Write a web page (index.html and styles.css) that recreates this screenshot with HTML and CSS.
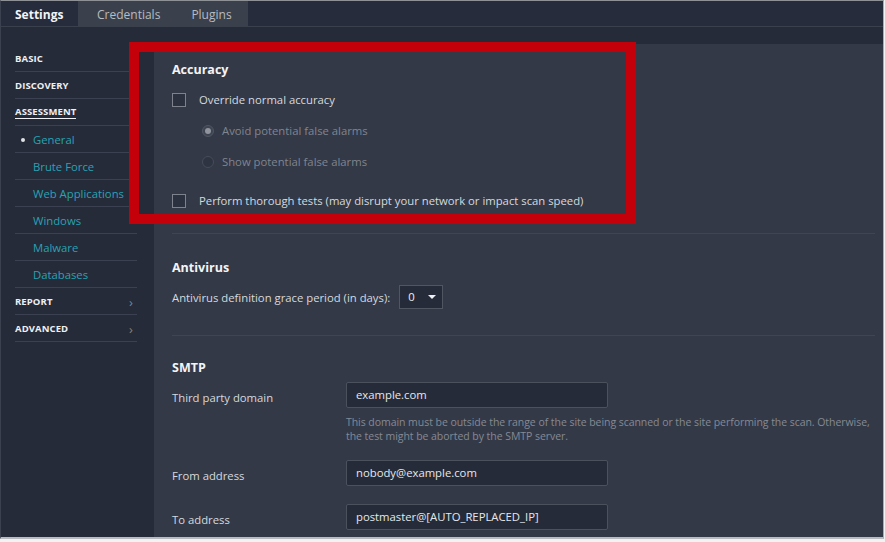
FILE: index.html
```html
<!DOCTYPE html>
<html>
<head>
<meta charset="utf-8">
<link rel="stylesheet" href="styles.css">
</head>
<body>
<div class="frame">
  <div class="tabs">
    <div class="tab active">Settings</div>
    <div class="tab-group">
      <div class="tab">Credentials</div>
      <div class="tab">Plugins</div>
    </div>
  </div>
  <div class="main">
    <nav class="sidebar">
      <div class="nav-item top">BASIC<span class="chev">&#8250;</span></div>
      <div class="nav-item top">DISCOVERY<span class="chev">&#8250;</span></div>
      <div class="nav-item top"><span class="current">ASSESSMENT</span><span class="chev">&#8250;</span></div>
      <div class="nav-item sub selected"><span class="dot"></span>General</div>
      <div class="nav-item sub">Brute Force</div>
      <div class="nav-item sub">Web Applications</div>
      <div class="nav-item sub">Windows</div>
      <div class="nav-item sub">Malware</div>
      <div class="nav-item sub">Databases</div>
      <div class="nav-item top">REPORT<span class="chev">&#8250;</span></div>
      <div class="nav-item top">ADVANCED<span class="chev">&#8250;</span></div>
    </nav>
    <section class="content">
      <div class="section s1">
        <h2 class="heading">Accuracy</h2>
        <label class="row check-row first"><span class="checkbox"></span>Override normal accuracy</label>
        <label class="row radio-row disabled"><span class="radio on"></span>Avoid potential false alarms</label>
        <label class="row radio-row disabled"><span class="radio"></span>Show potential false alarms</label>
        <label class="row check-row gap"><span class="checkbox"></span>Perform thorough tests (may disrupt your network or impact scan speed)</label>
      </div>
      <div class="section s2">
        <h2 class="heading">Antivirus</h2>
        <div class="grace">
          <span>Antivirus definition grace period (in days):</span>
          <div class="select">0<span class="caret"></span></div>
        </div>
      </div>
      <div class="section s3">
        <h2 class="heading">SMTP</h2>
        <div class="field f1">
          <div class="label">Third party domain</div>
          <div class="control">
            <div class="input">example.com</div>
            <p class="help">This domain must be outside the range of the site being scanned or the site performing the scan. Otherwise, the test might be aborted by the SMTP server.</p>
          </div>
        </div>
        <div class="field f2">
          <div class="label">From address</div>
          <div class="control"><div class="input">nobody@example.com</div></div>
        </div>
        <div class="field f3">
          <div class="label">To address</div>
          <div class="control"><div class="input">postmaster@[AUTO_REPLACED_IP]</div></div>
        </div>
      </div>
    </section>
  </div>
  <div class="highlight"></div>
</div>
</body>
</html>
```
FILE: styles.css
```css
* { box-sizing: border-box; }
html, body { margin: 0; padding: 0; }
body {
  background: #f2f2f2;
  font-family: "Open Sans", "Noto Sans", sans-serif;
  width: 885px;
  height: 542px;
  overflow: hidden;
}
.frame {
  position: relative;
  width: 884px;
  height: 539px;
  background: #252b39;
  border-top: 1px solid #8e9196;
  border-right: 1px solid #a9acb1;
  border-left: 1px solid #3c4150;
  border-bottom: 2px solid #b9bbbe;
  overflow: hidden;
}
.tabs {
  display: flex;
  height: 26px;
  background: #262c3b;
  border-bottom: 1px solid #3a404c;
}
.tab {
  font-size: 12px;
  line-height: 24px;
  padding-top: 2px;
  color: #b8bbc1;
}
.tab.active {
  width: 77px;
  padding-left: 14px;
  font-weight: 700;
  color: #f3f4f6;
}
.tab-group {
  display: flex;
  background: #3b414c;
  width: 170px;
  padding-left: 19px;
  gap: 31px;
}
.main {
  display: flex;
  height: 510px;
}
.sidebar {
  width: 153px;
  padding: 18px 0 0 14px;
  background: #252b39;
}
.nav-item {
  position: relative;
  width: 122px;
  height: 27px;
  border-bottom: 1px solid #3b4150;
  display: flex;
  align-items: center;
  font-size: 11.3px;
  color: #2aa2b3;
}
.nav-item.top {
  font-size: 9.5px;
  font-weight: 700;
  color: #eef0f3;
  letter-spacing: 0.1px;
}
.nav-item .current {
  border-bottom: 1px solid #eef0f3;
  line-height: 12px;
}
.nav-item.sub { padding-left: 18px; padding-top: 1px; }
.dot {
  position: absolute;
  left: 6px;
  top: 12px;
  width: 4px;
  height: 4px;
  border-radius: 50%;
  background: #dfe2e6;
}
.chev {
  position: absolute;
  right: 4px;
  top: 5px;
  font-size: 13px;
  font-weight: 400;
  color: #7d828c;
}
.content {
  flex: 1;
  margin-top: 17px;
  background: #333947;
  padding: 0 8px 0 18px;
}
.section { border-bottom: 1px solid #3f4553; }
.s1 { padding-top: 16px; height: 190px; }
.s2 { padding-top: 24px; height: 102px; }
.s3 { padding-top: 22px; border-bottom: none; }
.heading {
  margin: 0;
  font-size: 12.5px;
  font-weight: 700;
  line-height: 20px;
  color: #f3f4f6;
}
.row {
  display: flex;
  align-items: center;
  height: 31px;
  font-size: 11.3px;
  color: #d6d9de;
}
.row.first { margin-top: 4px; }
.row.gap { margin-top: 8px; }
.checkbox {
  width: 14px;
  height: 14px;
  border: 1px solid #7d828c;
  background: #2b313e;
  margin-right: 13px;
}
.radio-row { padding-left: 30px; color: #80858f; }
.radio {
  width: 12px;
  height: 12px;
  border-radius: 50%;
  border: 1px solid #464c58;
  background: #2e3441;
  margin-right: 8px;
  display: flex;
  align-items: center;
  justify-content: center;
}
.radio.on { background: #3e4451; border-color: #505662; }
.radio.on::after {
  content: "";
  width: 6px;
  height: 6px;
  border-radius: 50%;
  background: #8f949d;
}
.grace {
  display: flex;
  align-items: center;
  margin-top: 7px;
  font-size: 11.3px;
  color: #d6d9de;
  gap: 9px;
}
.select {
  position: relative;
  width: 44px;
  height: 24px;
  border: 1px solid #505662;
  background: #252b38;
  color: #eef0f3;
  font-size: 11.3px;
  line-height: 22px;
  padding-left: 8px;
}
.caret {
  position: absolute;
  left: 28px;
  top: 9px;
  width: 0;
  height: 0;
  border-left: 4px solid transparent;
  border-right: 4px solid transparent;
  border-top: 4px solid #eef0f3;
}
.field { display: flex; }
.f1 { margin-top: 4px; }
.f2 { margin-top: 17px; }
.f3 { margin-top: 18px; }
.label {
  width: 174px;
  padding-top: 6px;
  line-height: 20px;
  font-size: 11.3px;
  color: #d6d9de;
}
.control { flex: 1; margin-right: -6px; }
.input {
  width: 262px;
  height: 26px;
  border: 1px solid #4b515d;
  border-radius: 2px;
  background: #252b38;
  color: #e6e8eb;
  font-size: 11.3px;
  line-height: 24px;
  padding-left: 9px;
}
.help {
  margin: 7px 0 0 0;
  font-size: 10.5px;
  line-height: 14px;
  color: #858a94;
  letter-spacing: -0.05px;
}
.highlight {
  position: absolute;
  left: 128px;
  top: 41px;
  width: 507px;
  height: 182px;
  border: 10px solid #c4000a;
}
```
